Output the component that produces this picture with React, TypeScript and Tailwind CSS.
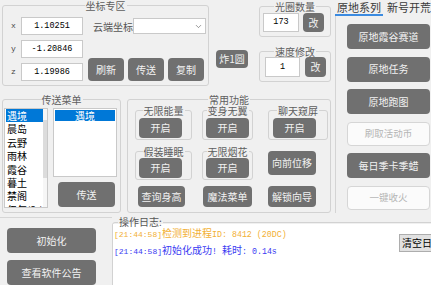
import type { ReactNode } from "react";
import { ChevronDown } from "lucide-react";

const places = ["遇境", "晨岛", "云野", "雨林", "霞谷", "暮土", "禁阁", "伊甸(2r)"];

function Btn({ children, className = "" }: { children: ReactNode; className?: string }) {
  return (
    <button
      className={`flex shrink-0 items-center justify-center rounded-[4px] bg-[#707070] text-[10px] leading-none text-[#f2f2f2] ${className}`}
    >
      {children}
    </button>
  );
}

function Group({
  title,
  className = "",
  children,
}: {
  title: string;
  className?: string;
  children: ReactNode;
}) {
  return (
    <fieldset className={`min-w-0 shrink-0 rounded-[3px] border border-[#d2d2d2] ${className}`}>
      <legend className="mx-auto px-[1px] text-[10px] leading-[11px] text-[#5e5e5e]">{title}</legend>
      {children}
    </fieldset>
  );
}

function Field({ value, className = "" }: { value: string; className?: string }) {
  return (
    <div
      className={`flex shrink-0 items-center justify-center border border-[#c9c9c9] bg-white font-['Liberation_Mono',monospace] text-[8.5px] text-black ${className}`}
    >
      {value}
    </div>
  );
}

export default function App() {
  const coords = [
    ["x", "1.10251"],
    ["y", "-1.20846"],
    ["z", "1.19986"],
  ];

  return (
    <div className="flex h-[285px] w-[431px] flex-col overflow-hidden bg-[#f0f0f0] font-['Noto_Sans_CJK_SC',sans-serif] text-[10px] text-[#333]">
      <div className="flex h-[217px] shrink-0">
        {/* left side */}
        <div className="flex w-[335px] shrink-0 flex-col">
          <div className="flex h-[94px] shrink-0">
            <Group title="坐标专区" className="ml-[2px] h-[86px] w-[207px]">
              <div className="flex pl-[8px] pt-[6px]">
                <div className="flex flex-col gap-[5px]">
                  {coords.map(([l, v]) => (
                    <div key={l} className="flex h-[18px] items-center">
                      <span className="w-[10px] font-['Liberation_Mono',monospace] text-[8px] text-[#444]">{l}</span>
                      <Field value={v} className="h-[18px] w-[62px]" />
                    </div>
                  ))}
                </div>
                <div className="ml-[5px] flex flex-col justify-between">
                  <div className="flex h-[18px] items-center pl-[5px]">
                    <span className="w-[40px] text-[10px] text-[#555]">云端坐标</span>
                    <div className="flex h-[16px] w-[73px] items-center justify-end border border-[#c9c9c9] bg-white pr-[2px]">
                      <ChevronDown size={9} strokeWidth={1.6} className="text-[#555]" />
                    </div>
                  </div>
                  <div className="flex gap-[4px]">
                    <Btn className="h-[23px] w-[36px]">刷新</Btn>
                    <Btn className="h-[23px] w-[36px]">传送</Btn>
                    <Btn className="h-[23px] w-[36px]">复制</Btn>
                  </div>
                </div>
              </div>
            </Group>

            <div className="w-[50px] shrink-0 pl-[7px] pt-[50px]">
              <Btn className="h-[18px] w-[32px]">炸1圆</Btn>
            </div>

            <div className="flex flex-col">
              <Group title="光圈数量" className="mt-[1px] h-[36px] w-[72px]">
                <div className="flex gap-[4px] pl-[3px] pt-[1px]">
                  <Field value="173" className="h-[19px] w-[36px]" />
                  <Btn className="h-[19px] w-[21px]">改</Btn>
                </div>
              </Group>
              <Group title="速度修改" className="mt-[9px] h-[36px] w-[72px]">
                <div className="flex gap-[5px] pl-[5px]">
                  <Field value="1" className="h-[20px] w-[35px]" />
                  <Btn className="h-[20px] w-[21px]">改</Btn>
                </div>
              </Group>
            </div>
          </div>

          <div className="flex shrink-0">
            <Group title="传送菜单" className="ml-[2px] h-[119px] w-[119px]">
              <div className="flex pl-[1px] pt-[3px]">
                {/* map list */}
                <div className="flex h-[100px] w-[44px] overflow-hidden border border-[#c9c9c9] bg-white">
                  <div className="flex-1 pl-[1px]">
                    {places.map((p, i) => (
                      <div
                        key={p}
                        className={`h-[13.4px] whitespace-nowrap pl-[1px] text-[10px] leading-[13.4px] ${
                          i === 0 ? "bg-[#0078d7] text-white" : "text-black"
                        }`}
                      >
                        {p}
                      </div>
                    ))}
                  </div>
                  <div className="w-[9px] shrink-0 bg-[#f6f6f6] pt-[11px]">
                    <div className="h-[58px] bg-[#dcdcdc]" />
                  </div>
                </div>
                <div className="ml-[5px] flex flex-col">
                  <div className="h-[69px] w-[64px] border border-[#c9c9c9] bg-white px-[1px] pt-[1px]">
                    <div className="h-[11px] bg-[#0078d7] text-center text-[10px] leading-[11px] text-white">遇境</div>
                  </div>
                  <Btn className="ml-[5px] mt-[5px] h-[25px] w-[57px]">传送</Btn>
                </div>
              </div>
            </Group>

            <Group title="常用功能" className="ml-[6px] h-[119px] w-[204px]">
              <div className="flex flex-col pl-[7px]">
                <div className="flex">
                  <Group title="无限能量" className="h-[35px] w-[57px]">
                    <Btn className="ml-[3px] mt-[2px] h-[20px] w-[43px]">开启</Btn>
                  </Group>
                  <Group title="变身无翼" className="ml-[10px] h-[35px] w-[51px]">
                    <Btn className="ml-[3px] mt-[2px] h-[20px] w-[43px]">开启</Btn>
                  </Group>
                  <Group title="聊天窥屏" className="ml-[15px] h-[35px] w-[60px]">
                    <Btn className="ml-[4px] mt-[2px] h-[20px] w-[43px]">开启</Btn>
                  </Group>
                </div>
                <div className="mt-[6px] flex">
                  <Group title="假装睡眠" className="h-[34px] w-[57px]">
                    <Btn className="ml-[3px] mt-[1px] h-[20px] w-[43px]">开启</Btn>
                  </Group>
                  <Group title="无限烟花" className="ml-[10px] h-[34px] w-[51px]">
                    <Btn className="ml-[3px] mt-[1px] h-[20px] w-[43px]">开启</Btn>
                  </Group>
                  <Btn className="ml-[15px] mt-[5px] h-[24px] w-[48px]">向前位移</Btn>
                </div>
                <div className="mt-[6px] flex">
                  <Btn className="ml-[3px] h-[21px] w-[47px]">查询身高</Btn>
                  <Btn className="ml-[18px] h-[21px] w-[49px]">魔法菜单</Btn>
                  <Btn className="ml-[16px] h-[21px] w-[48px]">解锁向导</Btn>
                </div>
              </div>
            </Group>
          </div>
        </div>

        {/* tabs */}
        <div className="flex w-[96px] shrink-0 flex-col">
          <div className="flex h-[16px] shrink-0 pt-[1px] text-[11px] leading-[13px] text-[#3a3a3a]">
            <div className="w-[50px] border-b-2 border-[#3c8be0] text-center">原地系列</div>
            <div className="ml-[4px] whitespace-nowrap">新号开荒</div>
          </div>
          <div className="mb-[4px] flex flex-1 flex-col gap-[7.5px] border-l border-[#d4d4d4] pl-[11px] pt-[8px]">
            <Btn className="h-[25px] w-[83px] text-[9.5px]">原地霞谷赛道</Btn>
            <Btn className="h-[25px] w-[83px] text-[9.5px]">原地任务</Btn>
            <Btn className="h-[25px] w-[83px] text-[9.5px]">原地跑图</Btn>
            <button className="flex h-[24px] w-[83px] shrink-0 items-center justify-center rounded-[4px] border border-[#d6d6d6] bg-[#fbfbfb] text-[9.5px] text-[#b5b5b5]">
              刷取活动币
            </button>
            <Btn className="h-[25px] w-[83px] text-[9.5px]">每日季卡季蜡</Btn>
            <button className="flex h-[24px] w-[83px] shrink-0 items-center justify-center rounded-[4px] border border-[#d6d6d6] bg-[#fbfbfb] text-[9.5px] text-[#b5b5b5]">
              一键收火
            </button>
          </div>
        </div>
      </div>

      {/* bottom */}
      <div className="flex h-[68px] shrink-0">
        <div className="flex w-[112px] shrink-0 flex-col gap-[7px] border-t border-[#d6d6d6] pl-[7px] pt-[10px]">
          <Btn className="h-[25px] w-[89px]">初始化</Btn>
          <Btn className="h-[25px] w-[89px]">查看软件公告</Btn>
        </div>
        <fieldset className="relative h-[80px] w-[330px] min-w-0 shrink-0 rounded-[3px] border border-[#d2d2d2]">
          <legend className="ml-[5px] bg-[#f0f0f0] px-[1px] text-[10px] leading-[10px] text-[#555]">操作日志:</legend>
          <div className="-mt-[3px] h-[70px] bg-white pl-[1px] pt-[1px] text-[10px] leading-[15px]">
            <div className="whitespace-nowrap text-[#f2b035]">
              <span className="font-['Liberation_Mono',monospace] text-[8px]">[21:44:58]</span>
              检测到进程
              <span className="font-['Liberation_Mono',monospace] text-[8.3px]">ID: 8412 (20DC)</span>
            </div>
            <div className="whitespace-nowrap text-[#3b3bf2]">
              <span className="font-['Liberation_Mono',monospace] text-[8px]">[21:44:58]</span>
              初始化成功
              <span className="font-['Liberation_Mono',monospace] text-[8.3px]">! </span>
              耗时
              <span className="font-['Liberation_Mono',monospace] text-[8.3px]">: 0.14s</span>
            </div>
          </div>
          <button className="absolute left-[286px] top-[7px] h-[18px] w-[44px] border border-[#adadad] bg-[#e1e1e1] pl-[2px] text-left text-[10px] leading-[16px] text-black">
            清空日志
          </button>
        </fieldset>
      </div>
    </div>
  );
}
